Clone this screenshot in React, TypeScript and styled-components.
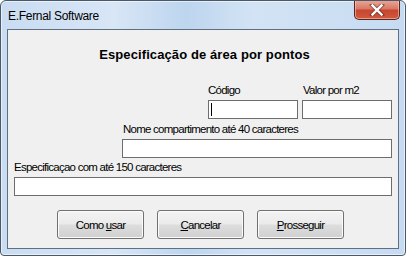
import React from "react";
import styled, {createGlobalStyle} from "styled-components";

const Global = createGlobalStyle`
  html, body {
    margin: 0;
    padding: 0;
    background: #ffffff;
  }
  * {
    box-sizing: border-box;
  }
`;

const Window = styled.div`
  width: 406px;
  height: 256px;
  border: 1px solid #4a5869;
  border-radius: 6px 6px 4px 4px;
  background: linear-gradient(90deg, #c9dcf1 0%, #d8e6f6 28%, #bdd5ee 46%, #d3e3f5 62%, #c6dbf1 100%);
  display: flex;
  flex-direction: column;
  overflow: hidden;
  box-shadow: inset 0 0 0 1px rgba(255, 255, 255, 0.55);
`;

const TitleBar = styled.div`
  height: 28px;
  display: flex;
  justify-content: space-between;
  align-items: flex-start;
  padding-left: 7px;
`;

const Title = styled.div`
  font-family: "Liberation Sans", Arial, sans-serif;
  font-size: 12px;
  line-height: 16px;
  letter-spacing: -0.3px;
  color: #000;
  margin-top: 7px;
`;

const CloseButton = styled.div`
  width: 46px;
  height: 20px;
  margin-top: -1px;
  margin-right: 5px;
  border: 1px solid #5b2519;
  border-top: none;
  border-radius: 0 0 5px 5px;
  background: linear-gradient(#e9a99a 0%, #d97a66 45%, #c8462f 55%, #cf5a40 100%);
  box-shadow: inset 0 0 0 1px rgba(255, 210, 200, 0.55);
  display: flex;
  align-items: center;
  justify-content: center;
`;

const Client = styled.div`
  margin: 0 6px;
  height: 220px;
  border: 1px solid #5f6f82;
  background: #f0f0f0;
  display: flex;
  flex-direction: column;
  padding: 0 6px;
  font-family: "Liberation Sans", Arial, sans-serif;
  font-size: 11.5px;
  letter-spacing: -0.75px;
  color: #000;
`;

const Heading = styled.div`
  margin-top: 17px;
  text-align: center;
  font-family: "Liberation Sans", Arial, sans-serif;
  font-weight: bold;
  font-size: 13px;
  line-height: 16px;
  letter-spacing: 0.1px;
  padding-left: 3px;
`;

const CodeRow = styled.div`
  margin-top: 21px;
  display: flex;
  justify-content: flex-end;
  gap: 4px;
`;

const Field = styled.div<{ $width?: number; $top?: number }>`
  display: flex;
  flex-direction: column;
  gap: 3px;
  width: ${p => (p.$width ? `${p.$width}px` : "100%")};
  align-self: flex-end;
  margin-top: ${p => p.$top ?? 0}px;
`;

const Label = styled.div<{ $indent?: number }>`
  line-height: 13px;
  white-space: nowrap;
  padding-left: ${p => p.$indent ?? 0}px;
`;

const TextBox = styled.div`
  height: 19px;
  border: 1px solid #6d6d6d;
  background: #fff;
  display: flex;
  align-items: center;
  padding-left: 2px;
`;

const Caret = styled.span`
  width: 1px;
  height: 13px;
  background: #000;
`;

const ButtonRow = styled.div`
  margin-top: 14px;
  margin-left: 43px;
  display: flex;
  gap: 13px;
`;

const Button = styled.div`
  width: 87px;
  height: 29px;
  border: 1px solid #707070;
  border-radius: 3px;
  background: linear-gradient(#f3f3f3 0%, #ebebeb 48%, #dddddd 52%, #d0d0d0 100%);
  box-shadow: inset 0 0 0 1px #fbfbfb;
  display: flex;
  align-items: center;
  justify-content: center;
  color: #000;
  u {
    text-decoration: underline;
    text-underline-offset: 1px;
  }
`;

function CloseGlyph() {
  return (
    <svg width="16" height="12" viewBox="0 0 16 12">
      <path d="M3 1 L13 11 M13 1 L3 11" stroke="#5a2a20" strokeWidth="4.2" strokeLinecap="square" fill="none" opacity="0.55"/>
      <path d="M3.5 1.5 L12.5 10.5 M12.5 1.5 L3.5 10.5" stroke="#ffffff" strokeWidth="2.4" strokeLinecap="square" fill="none"/>
    </svg>
  );
}

export default function App() {
  return (
    <>
      <Global/>
      <Window>
        <TitleBar>
          <Title>E.Fernal Software</Title>
          <CloseButton><CloseGlyph/></CloseButton>
        </TitleBar>
        <Client>
          <Heading>Especificação de área por pontos</Heading>
          <CodeRow>
            <Field $width={90}>
              <Label>Código</Label>
              <TextBox><Caret/></TextBox>
            </Field>
            <Field $width={90}>
              <Label $indent={1}>Valor por m2</Label>
              <TextBox/>
            </Field>
          </CodeRow>
          <Field $width={270} $top={4}>
            <Label $indent={1}>Nome compartimento até 40 caracteres</Label>
            <TextBox/>
          </Field>
          <Field $top={3}>
            <Label>Especificaçao com até 150 caracteres</Label>
            <TextBox/>
          </Field>
          <ButtonRow>
            <Button>Como&nbsp;<u>u</u>sar</Button>
            <Button><u>C</u>ancelar</Button>
            <Button><u>P</u>rosseguir</Button>
          </ButtonRow>
        </Client>
      </Window>
    </>
  );
}
